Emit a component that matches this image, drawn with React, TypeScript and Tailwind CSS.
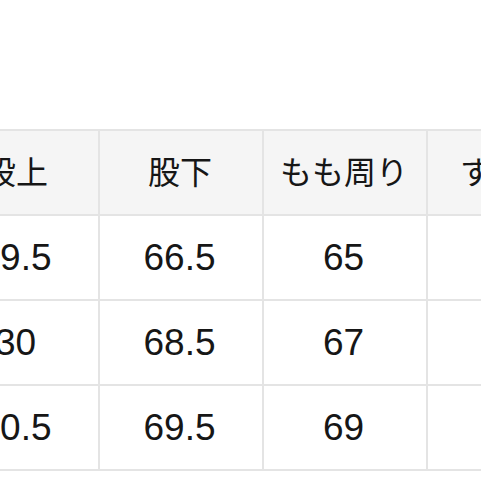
import React from "react";

const headers = ["股上", "股下", "もも周り", "すそ幅"];
const rows = [
  ["29.5", "66.5", "65", "21"],
  ["30", "68.5", "67", "22"],
  ["30.5", "69.5", "69", "23"],
];

export default function App() {
  return (
    <div
      className="w-[481px] h-[481px] overflow-hidden bg-white text-[#161616]"
      style={{ fontFamily: '"Liberation Sans", "Noto Sans CJK JP", sans-serif' }}
    >
      <div className="pt-[129px] pl-0">
        <div className="ml-[-66px] w-[660px] grid grid-cols-[162px_162px_162px_162px] gap-[2px] bg-[#e4e4e4] border-2 border-[#e4e4e4]">
          {headers.map((h) => (
            <div
              key={h}
              className="h-[83px] bg-[#f5f5f5] flex items-center justify-center pr-[2px] text-[32px] whitespace-nowrap"
            >
              {h}
            </div>
          ))}
          {rows.map((r, i) =>
            r.map((v, j) => (
              <div
                key={`${i}-${j}`}
                className="h-[83px] bg-white flex items-center justify-center pr-[3px] text-[37px] whitespace-nowrap"
              >
                {v}
              </div>
            ))
          )}
        </div>
      </div>
    </div>
  );
}
